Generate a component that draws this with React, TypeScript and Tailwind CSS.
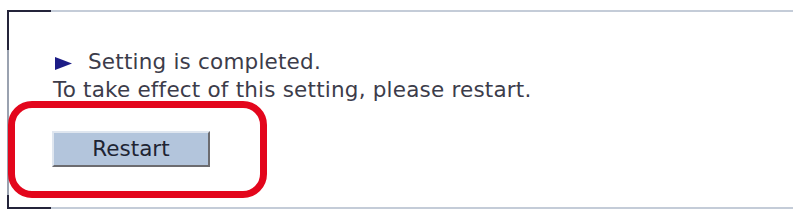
function Rule() {
  return (
    <div className="flex h-[2px]">
      <div className="w-[44px] bg-[#24243a]" />
      <div className="flex-1 bg-[#c4ccd8]" />
    </div>
  )
}

export default function App() {
  return (
    <div className="h-[212px] w-[795px] overflow-hidden bg-white pl-[7px] pt-[10px] font-['DejaVu_Sans',sans-serif]">
      <div className="flex h-[199px] w-[786px] flex-col">
        <Rule />
        <div className="flex flex-1">
          <div className="flex w-[2px] flex-col">
            <div className="h-[38px] bg-[#24243a]" />
            <div className="flex-1 bg-[#9aa2b0]" />
            <div className="h-[12px] bg-[#24243a]" />
          </div>
          <div className="flex-1">
            <div className="pl-[44px] pt-[36px] text-[21.5px] leading-[28px] tracking-[0.2px] text-[#3c3c4a]">
              <div className="flex items-center">
                <svg width="17" height="13" viewBox="0 0 17 13" className="ml-[2px] mr-[16px] mt-[2px]">
                  <path d="M0 0 L17 6.5 L0 13 Z" fill="#1c1c86" />
                </svg>
                <span>Setting is completed.</span>
              </div>
              <div>To take effect of this setting, please restart.</div>
            </div>

            <div className="-ml-px mt-[-3px] flex h-[97px] w-[259px] items-center rounded-[24px] border-[7px] border-[#e3061c] pb-[2px] pl-[37px]">
              <button className="h-[36px] w-[158px] border-2 border-b-[#6c6c70] border-l-[#dfe6ef] border-r-[#6c6c70] border-t-[#dfe6ef] bg-[#b3c5dc] text-[21.5px] leading-none text-[#1e2433]">
                Restart
              </button>
            </div>
          </div>
        </div>
        <Rule />
      </div>
    </div>
  )
}
